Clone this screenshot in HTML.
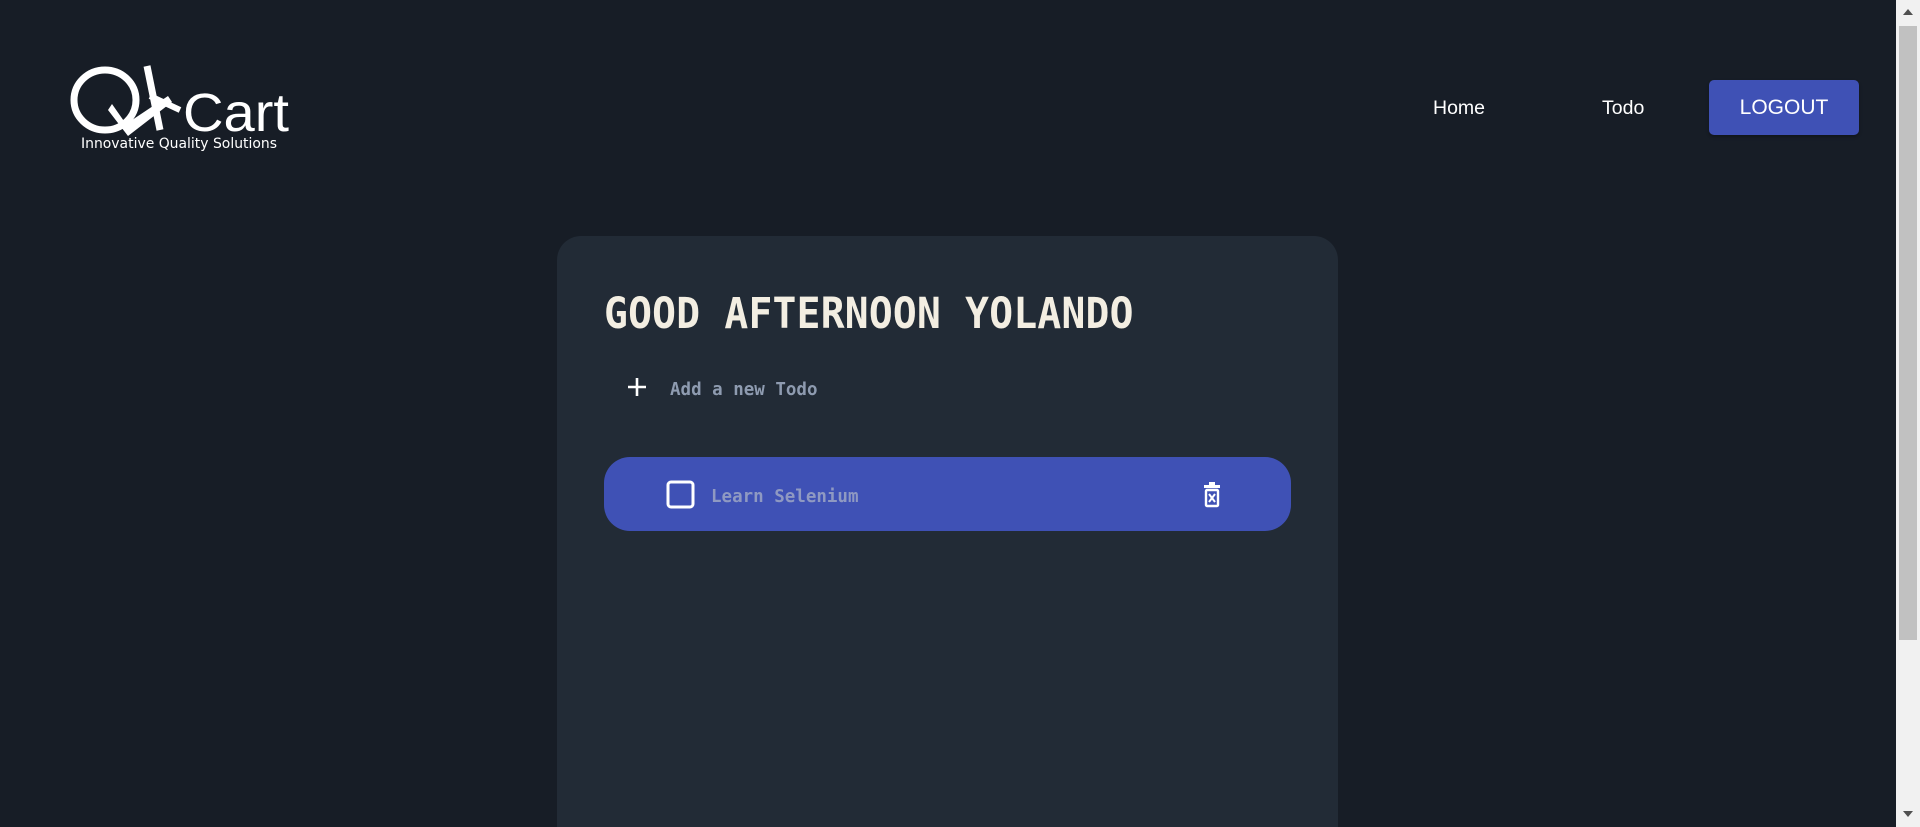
<!DOCTYPE html>
<html><head><meta charset="utf-8"><style>
html,body{margin:0;padding:0;overflow:hidden;width:1920px;height:827px;}
body{background:#171d26;position:relative;font-family:"Liberation Sans",sans-serif;}
.abs{position:absolute;}
.sb{left:1896px;top:0;width:24px;height:827px;background:#f1f1f1;}
.thumb{left:1899px;top:26px;width:18px;height:614px;background:#c1c1c1;}
.nav{color:#fff;font-size:19.5px;top:97px;}
.btn{left:1709px;top:80px;width:150px;height:55px;background:#3f51b5;border-radius:5px;color:#fff;font-size:21px;line-height:55px;text-align:center;box-shadow:0 2px 3px rgba(0,0,0,.3);}
.card{left:557px;top:236px;width:781px;height:591px;background:#222b36;border-radius:24px 24px 0 0;}
.h{left:604px;top:289px;font-family:"DejaVu Sans Mono",monospace;font-weight:bold;font-size:39.6px;letter-spacing:0.25px;color:#f3eee2;transform:scaleY(1.08);transform-origin:left top;white-space:nowrap;}
.mono{font-family:"DejaVu Sans Mono",monospace;font-weight:bold;font-size:17.5px;color:#8e9bb0;white-space:nowrap;}
.item{left:604px;top:457px;width:687px;height:74px;background:#3f51b5;border-radius:26px;}
</style></head><body>
<svg class="abs" style="left:68px;top:62px" width="230" height="92" viewBox="0 0 230 92">
<ellipse cx="37" cy="38" rx="31" ry="30" fill="none" stroke="#fff" stroke-width="7"/>
<path d="M44 42 L58 62 L100 34 L104 40 L60 74 L40 48Z" fill="#fff"/>
<path d="M79 4 L92 68" stroke="#fff" stroke-width="7"/>
<path d="M82 34 L112 48" stroke="#fff" stroke-width="6"/>
<text x="115" y="69" fill="#fff" font-family="Liberation Sans,sans-serif" font-size="54" textLength="106" lengthAdjust="spacingAndGlyphs">Cart</text>
<text x="13" y="86" fill="#fff" font-family="DejaVu Sans,sans-serif" font-size="14" textLength="196" lengthAdjust="spacingAndGlyphs">Innovative Quality Solutions</text>
</svg>
<div class="abs nav" style="left:1433px">Home</div>
<div class="abs nav" style="left:1602px">Todo</div>
<div class="abs btn">LOGOUT</div>
<div class="abs card"></div>
<div class="abs h">GOOD AFTERNOON YOLANDO</div>
<svg class="abs" style="left:627px;top:377px" width="20" height="20"><path d="M10 1V19M1 10H19" stroke="#fff" stroke-width="2.6"/></svg>
<div class="abs mono" style="left:670px;top:380px;">Add a new Todo</div>
<div class="abs item"></div>
<svg class="abs" style="left:666px;top:480px" width="29" height="29"><rect x="2" y="2" width="25" height="25" rx="3" fill="none" stroke="#fff" stroke-width="3"/></svg>
<div class="abs mono" style="left:711px;top:487px;color:#8f99c2;">Learn Selenium</div>
<svg class="abs" style="left:1203px;top:482px" width="18" height="26" viewBox="0 0 18 26"><rect x="1" y="3" width="16" height="3" fill="#fff"/><rect x="6" y="0" width="6" height="3" fill="#fff"/><rect x="3" y="8" width="12" height="16" rx="1" fill="none" stroke="#fff" stroke-width="2.4"/><path d="M6 12L12 20M12 12L6 20" stroke="#fff" stroke-width="2"/></svg>
<div class="abs sb"></div>
<div class="abs thumb"></div>
<svg class="abs" style="left:1900px;top:6px" width="16" height="12"><path d="M3 9L8 3L13 9Z" fill="#505050"/></svg>
<svg class="abs" style="left:1900px;top:808px" width="16" height="12"><path d="M3 3L8 9L13 3Z" fill="#505050"/></svg>
</body></html>
